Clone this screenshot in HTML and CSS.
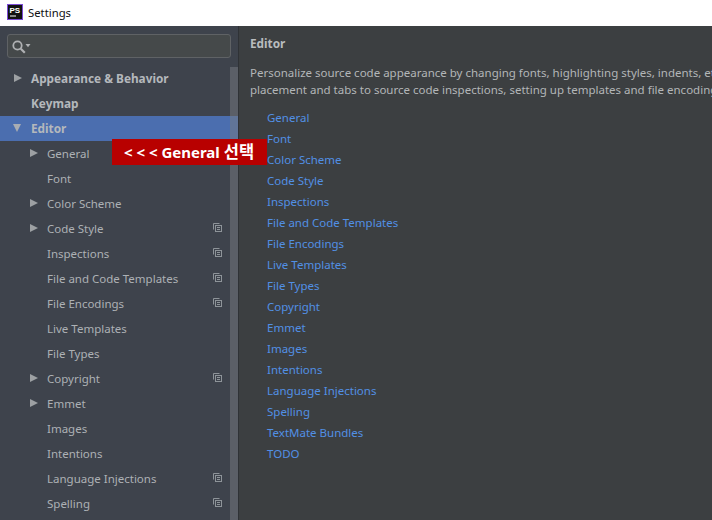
FILE: index.html
```html
<!DOCTYPE html>
<html lang="en">
<head>
<meta charset="utf-8">
<title>Settings</title>
<link rel="stylesheet" href="styles.css">
</head>
<body>
<svg class="defs" width="0" height="0" aria-hidden="true">
  <symbol id="copy" viewBox="0 0 9 9">
    <path d="M.5 6.5v-6h6" fill="none" stroke="currentColor"/>
    <rect x="2.5" y="2.5" width="6" height="6" fill="#3e434c" stroke="currentColor"/>
    <path d="M4 4.5h3M4 6.5h3" stroke="currentColor"/>
  </symbol>
</svg>
<header class="titlebar">
  <svg class="logo" width="16" height="16" viewBox="0 0 16 16">
    <rect x=".5" y=".5" width="15" height="15" fill="#111" stroke="#7b4bd6"/>
    <text x="2.5" y="9" class="logo-text">PS</text>
    <rect x="3" y="11.5" width="6" height="1" fill="#fff"/>
  </svg>
  <span class="title">Settings</span>
</header>
<main class="main">
  <aside class="sidebar">
    <div class="search">
      <svg width="20" height="14" viewBox="0 0 20 14">
        <circle cx="5.5" cy="5.5" r="4.2" fill="none" stroke="#afb1b3" stroke-width="1.8"/>
        <path d="M8.8 8.8l4 4" stroke="#afb1b3" stroke-width="2.2"/>
        <path d="M13.5 4h5l-2.5 3.2z" fill="#afb1b3"/>
      </svg>
    </div>
    <ul class="tree">
      <li class="row top bold"><i class="arrow"></i>Appearance &amp; Behavior</li>
      <li class="row top bold">Keymap</li>
      <li class="row top bold selected"><i class="arrow down"></i>Editor</li>
      <li class="row sub"><i class="arrow"></i>General</li>
      <li class="row sub">Font</li>
      <li class="row sub"><i class="arrow"></i>Color Scheme</li>
      <li class="row sub"><i class="arrow"></i>Code Style<svg class="copy"><use href="#copy"/></svg></li>
      <li class="row sub">Inspections<svg class="copy"><use href="#copy"/></svg></li>
      <li class="row sub">File and Code Templates<svg class="copy"><use href="#copy"/></svg></li>
      <li class="row sub">File Encodings<svg class="copy"><use href="#copy"/></svg></li>
      <li class="row sub">Live Templates</li>
      <li class="row sub">File Types</li>
      <li class="row sub"><i class="arrow"></i>Copyright<svg class="copy"><use href="#copy"/></svg></li>
      <li class="row sub"><i class="arrow"></i>Emmet</li>
      <li class="row sub">Images</li>
      <li class="row sub">Intentions</li>
      <li class="row sub">Language Injections<svg class="copy"><use href="#copy"/></svg></li>
      <li class="row sub">Spelling<svg class="copy"><use href="#copy"/></svg></li>
    </ul>
    <div class="scrollbar"></div>
  </aside>
  <section class="content">
    <h1 class="heading">Editor</h1>
    <p class="desc">Personalize source code appearance by changing fonts, highlighting styles, indents, etc. Customize the editor from caret<br>placement and tabs to source code inspections, setting up templates and file encodings.</p>
    <ul class="links">
      <li>General</li>
      <li>Font</li>
      <li>Color Scheme</li>
      <li>Code Style</li>
      <li>Inspections</li>
      <li>File and Code Templates</li>
      <li>File Encodings</li>
      <li>Live Templates</li>
      <li>File Types</li>
      <li>Copyright</li>
      <li>Emmet</li>
      <li>Images</li>
      <li>Intentions</li>
      <li>Language Injections</li>
      <li>Spelling</li>
      <li>TextMate Bundles</li>
      <li>TODO</li>
    </ul>
  </section>
  <div class="callout">&lt; &lt; &lt; General <span class="callout-ko">선택</span></div>
</main>
</body>
</html>
```
FILE: styles.css
```css
* { box-sizing: border-box; }
html, body { margin: 0; height: 100%; overflow: hidden; }
body { width: 712px; height: 520px; background: #fff; font-family: "Noto Sans", "Noto Sans CJK KR", sans-serif; font-size: 11.5px; }
.defs { position: absolute; }
.titlebar { height: 26px; display: flex; align-items: center; gap: 5px; padding: 0 0 2px 7px; background: #fff; }
.logo { display: block; }
.logo-text { font: 700 8px "Liberation Sans", sans-serif; fill: #fff; }
.title { color: #111; font-size: 11.3px; }
.main { position: relative; display: flex; height: 494px; }
.sidebar { position: relative; width: 239px; flex: none; padding-top: 8px; background: #3e434c; border-right: 1px solid #2f3236; overflow: hidden; }
.search { width: 224px; height: 24px; margin-left: 7px; padding: 2px 0 0 4px; display: flex; align-items: center; background: #45494a; border: 1px solid #5f6265; border-radius: 3px; }
.search svg { display: block; }
.tree { list-style: none; margin: 8px 0 0; padding: 0; }
.row { position: relative; height: 25px; line-height: 25px; color: #adb1b5; white-space: nowrap; }
.top { padding-left: 31px; }
.sub { padding-left: 47px; }
.bold { font-weight: 700; font-size: 11.8px; color: #b4b8bc; }
.selected { background: #4b6eaf; }
.arrow { position: absolute; top: 8px; width: 0; height: 0; border-style: solid; border-width: 4.5px 0 4.5px 8px; border-color: transparent transparent transparent #9da0a3; }
.top .arrow { left: 14px; }
.sub .arrow { left: 30px; }
.top .arrow.down { left: 13px; top: 8px; border-width: 8px 4.5px 0; border-color: #a9adb3 transparent transparent; }
.copy { position: absolute; left: 213px; top: 7px; width: 9px; height: 9px; color: #8e9499; }
.scrollbar { position: absolute; left: 230px; top: 41px; bottom: 0; width: 8px; background: rgba(120, 124, 130, .5); }
.content { flex: 1; min-width: 0; padding: 8px 0 0 11px; background: #3c3f41; color: #bbbbbb; overflow: hidden; white-space: nowrap; }
.heading { margin: 0; font-size: 11.8px; line-height: 18px; font-weight: 700; color: #b9bcbe; }
.desc { margin: 12px 0 0; line-height: 17px; color: #b3b6b8; }
.links { list-style: none; margin: 9px 0 0; padding: 0 0 0 17px; color: #5290e5; }
.links li { height: 21px; line-height: 21px; }
.callout { position: absolute; left: 112px; top: 113px; width: 155px; height: 26px; padding-left: 12px; line-height: 26px; background: #b80000; color: #fff; font-weight: 700; font-size: 15px; white-space: nowrap; }
.callout-ko { font-size: 16.5px; }
```
